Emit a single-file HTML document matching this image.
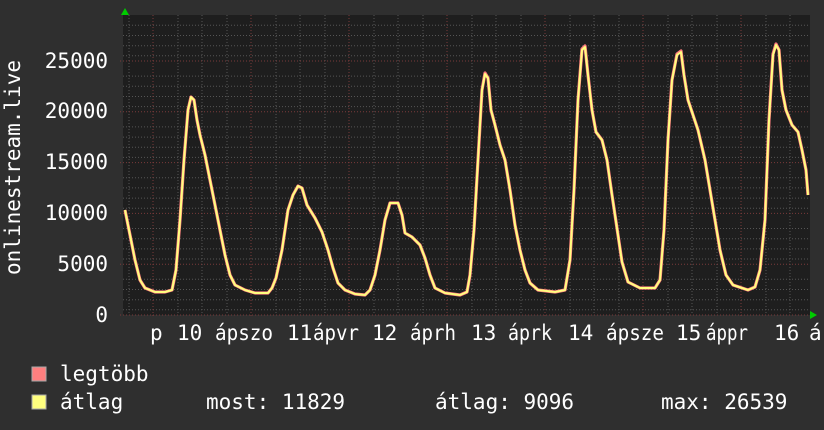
<!DOCTYPE html>
<html><head><meta charset="utf-8"><style>
html,body{margin:0;padding:0;background:#2f2f2f;}
svg{display:block}
text{font-family:"DejaVu Sans Mono","Liberation Mono",monospace;fill:#fff;font-size:21px}
</style></head><body>
<svg width="824" height="430" xmlns="http://www.w3.org/2000/svg">
<rect x="0" y="0" width="824" height="430" fill="#2f2f2f"/>
<rect x="123" y="15" width="687" height="300" fill="#1e1e1e"/>
<g stroke="#555" stroke-width="1" stroke-dasharray="1,2">
<path d="M129 15V315M178 15V315M202 15V315M227 15V315M276 15V315M300 15V315M325 15V315M374 15V315M398 15V315M423 15V315M472 15V315M496 15V315M521 15V315M570 15V315M594 15V315M619 15V315M668 15V315M692 15V315M717 15V315M766 15V315M790 15V315"/>
<path d="M123 25.3H810M123 35.5H810M123 45.7H810M123 55.8H810M123 76.1H810M123 86.3H810M123 96.5H810M123 106.6H810M123 126.9H810M123 137.1H810M123 147.3H810M123 157.4H810M123 177.7H810M123 187.9H810M123 198.1H810M123 208.2H810M123 228.5H810M123 238.7H810M123 248.9H810M123 259H810M123 279.3H810M123 289.5H810M123 299.7H810M123 309.8H810"/>
</g>
<g stroke="#7a3a3a" stroke-width="1" stroke-dasharray="1,2">
<path d="M153 15V318M251 15V318M349 15V318M447 15V318M545 15V318M643 15V318M741 15V318"/>
<path d="M120 315H810M120 264.2H810M120 213.4H810M120 162.6H810M120 111.8H810M120 61H810"/>
</g>
<polyline fill="none" stroke="#ff7f7f" stroke-width="3.2" stroke-linejoin="round" points="125,210 130,235 135,260 140,280 145,288 155,292 165,292 172,290 176,270 180,220 184,160 188,110 191,97 194,100 197,120 200,135 205,155 210,180 215,205 220,230 225,255 230,275 235,285 245,290 255,293 268,293 272,288 276,278 282,250 288,210 293,195 298,186 302,188 307,205 315,218 322,232 328,250 333,268 338,283 345,290 355,294 365,295 370,290 375,275 380,250 385,220 390,203 398,203 402,215 405,233 412,237 420,245 425,258 430,275 435,288 445,293 460,295 467,292 470,275 474,230 478,160 482,90 485,73 488,78 491,110 495,125 500,145 505,160 510,190 515,225 520,250 525,270 530,283 538,290 555,292 565,290 570,260 574,190 578,100 582,49 585,46 588,75 592,110 596,132 602,140 607,160 612,195 618,235 622,262 628,282 640,288 655,288 660,280 664,230 668,140 672,80 677,54 681,51 684,75 688,100 693,115 698,130 705,160 710,190 715,220 720,250 726,275 733,285 748,290 755,287 760,270 765,220 769,120 773,54 776,44 779,50 782,90 786,110 792,125 798,132 802,150 806,170 808,195"/>
<polyline fill="none" stroke="#ffff7f" stroke-width="2" stroke-linejoin="round" points="125,210 130,235 135,260 140,280 145,288 155,292 165,292 172,290 176,270 180,220 184,160 188,110 191,97 194,100 197,120 200,135 205,155 210,180 215,205 220,230 225,255 230,275 235,285 245,290 255,293 268,293 272,288 276,278 282,250 288,210 293,195 298,186 302,188 307,205 315,218 322,232 328,250 333,268 338,283 345,290 355,294 365,295 370,290 375,275 380,250 385,220 390,203 398,203 402,215 405,233 412,237 420,245 425,258 430,275 435,288 445,293 460,295 467,292 470,275 474,230 478,160 482,90 485,74 488,78 491,110 495,125 500,145 505,160 510,190 515,225 520,250 525,270 530,283 538,290 555,292 565,290 570,260 574,190 578,100 582,50 585,47 588,75 592,110 596,132 602,140 607,160 612,195 618,235 622,262 628,282 640,288 655,288 660,280 664,230 668,140 672,80 677,55 681,52 684,75 688,100 693,115 698,130 705,160 710,190 715,220 720,250 726,275 733,285 748,290 755,287 760,270 765,220 769,120 773,55 776,45 779,50 782,90 786,110 792,125 798,132 802,150 806,170 808,195"/>
<polygon points="121,15 129,15 125,8" fill="#00cc00"/>
<polygon points="810,311 810,319 817,315" fill="#00cc00"/>
<g text-anchor="end">
<text x="108" y="322">0</text>
<text x="108" y="271">5000</text>
<text x="108" y="220">10000</text>
<text x="108" y="169">15000</text>
<text x="108" y="118">20000</text>
<text x="108" y="68">25000</text>
</g>
<text transform="translate(20,275) rotate(-90)" textLength="215" lengthAdjust="spacingAndGlyphs">onlinestream.live</text>
<g>
<text x="150" y="340">p</text>
<text x="177" y="340">10</text>
<text x="215" y="340" textLength="58" lengthAdjust="spacingAndGlyphs">ápszo</text>
<text x="287" y="340">11</text>
<text x="313" y="340" textLength="46" lengthAdjust="spacingAndGlyphs">ápvr</text>
<text x="372" y="340">12</text>
<text x="410" y="340" textLength="46" lengthAdjust="spacingAndGlyphs">áprh</text>
<text x="471" y="340">13</text>
<text x="508" y="340" textLength="44" lengthAdjust="spacingAndGlyphs">áprk</text>
<text x="568" y="340">14</text>
<text x="606" y="340" textLength="58" lengthAdjust="spacingAndGlyphs">ápsze</text>
<text x="676" y="340">15</text>
<text x="706" y="340" textLength="42" lengthAdjust="spacingAndGlyphs">áppr</text>
<text x="774" y="340">16</text>
<text x="809" y="340">á</text>
</g>
<rect x="32" y="367" width="14" height="14" fill="#ff7f7f" stroke="#aaa" stroke-width="1"/>
<rect x="32" y="395" width="14" height="14" fill="#ffff7f" stroke="#aaa" stroke-width="1"/>
<text x="60" y="381">legtöbb</text>
<text x="60" y="409">átlag</text>
<text x="206" y="409">most: 11829</text>
<text x="435" y="409">átlag: 9096</text>
<text x="661" y="409">max: 26539</text>
</svg>
</body></html>
